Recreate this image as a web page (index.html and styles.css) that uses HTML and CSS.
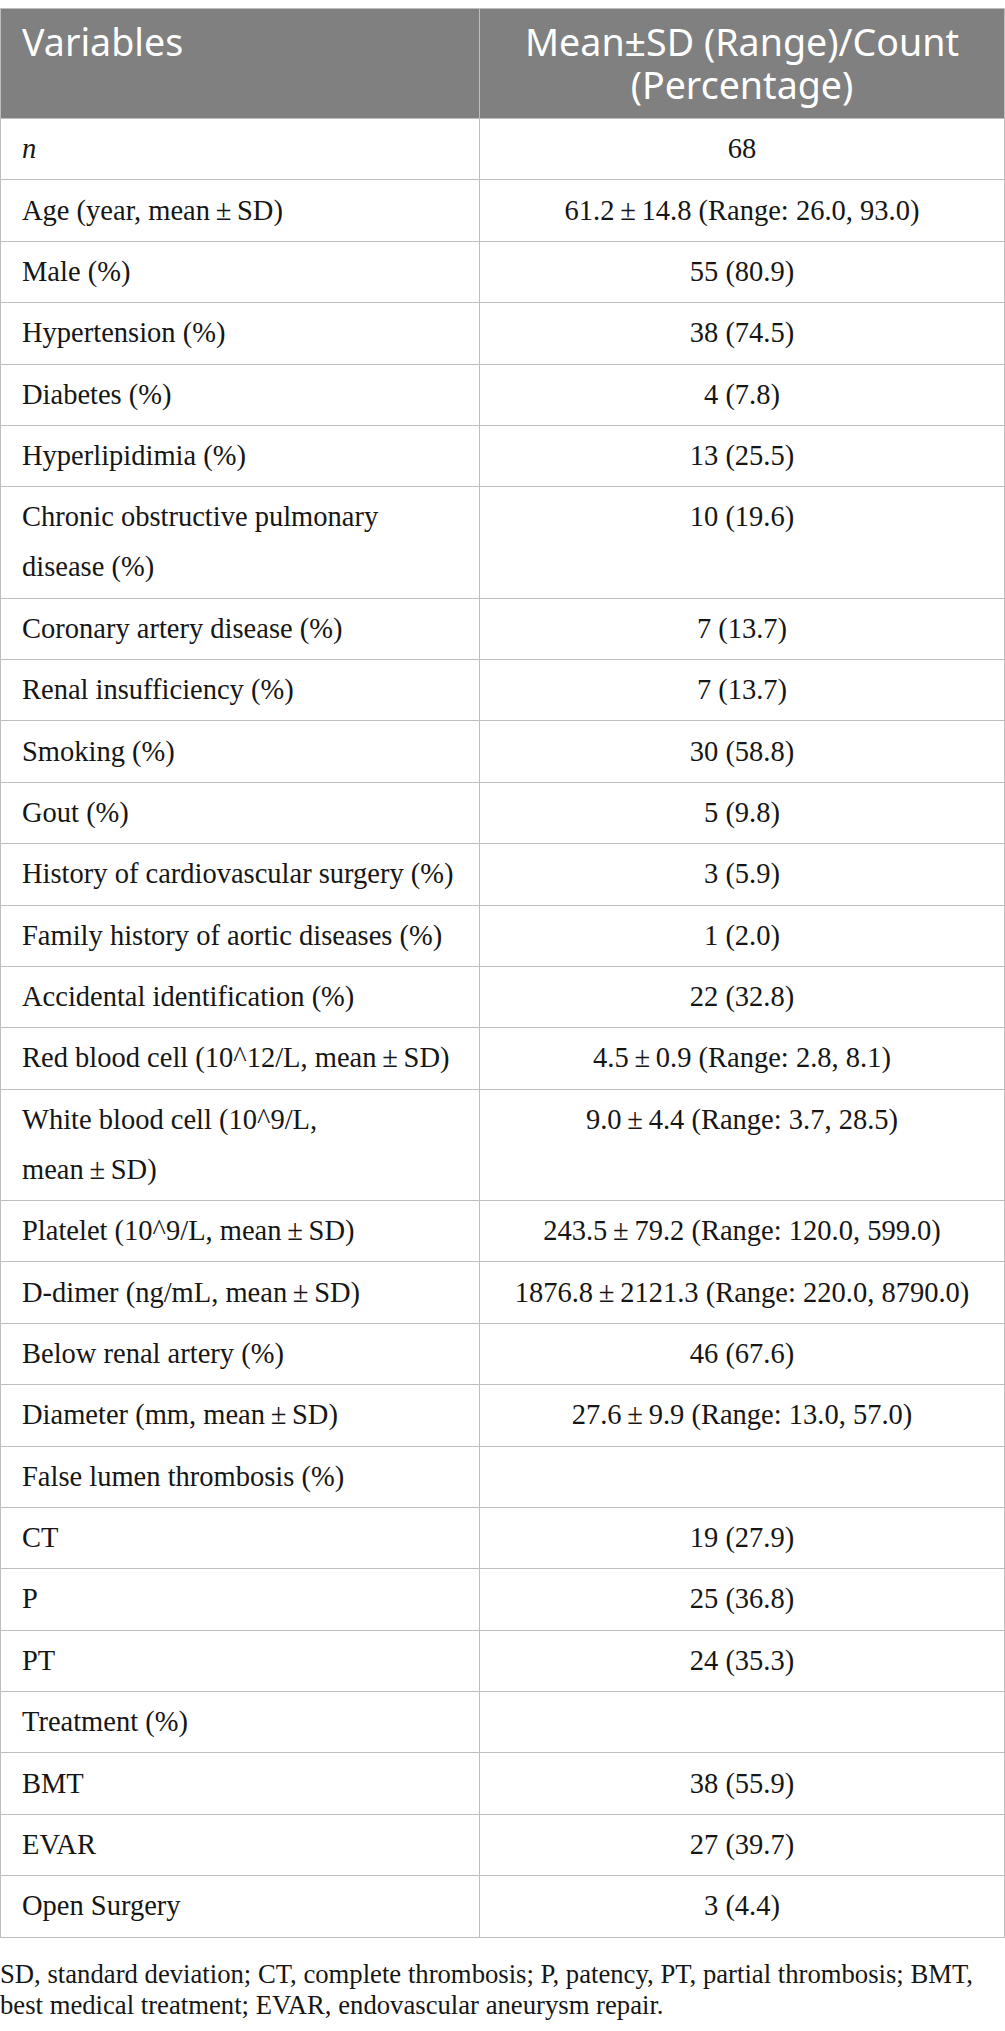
FILE: index.html
```html
<!DOCTYPE html>
<html lang="en">
<head>
    <meta charset="UTF-8">
    <meta name="viewport" content="width=device-width, initial-scale=1.0">
    <title>Table 1</title>

    <link rel="stylesheet" href="styles.css">

</head>
<body>

    <table class="tabla">
        <colgroup>
            <col class="col-variable">
            <col class="col-valor">
        </colgroup>
        <thead>
            <tr>
                <th class="izq">Variables</th>
                <th class="centro">Mean±SD (Range)/Count (Percentage)</th>
            </tr>
        </thead>
        <tbody>
            <tr><td><i>n</i></td><td class="centro">68</td></tr>
            <tr><td>Age (year, mean&#8201;±&#8201;SD)</td><td class="centro">61.2&#8201;±&#8201;14.8 (Range: 26.0, 93.0)</td></tr>
            <tr><td>Male (%)</td><td class="centro">55 (80.9)</td></tr>
            <tr><td>Hypertension (%)</td><td class="centro">38 (74.5)</td></tr>
            <tr><td>Diabetes (%)</td><td class="centro">4 (7.8)</td></tr>
            <tr><td>Hyperlipidimia (%)</td><td class="centro">13 (25.5)</td></tr>
            <tr><td>Chronic obstructive pulmonary<br>disease (%)</td><td class="centro">10 (19.6)</td></tr>
            <tr><td>Coronary artery disease (%)</td><td class="centro">7 (13.7)</td></tr>
            <tr><td>Renal insufficiency (%)</td><td class="centro">7 (13.7)</td></tr>
            <tr><td>Smoking (%)</td><td class="centro">30 (58.8)</td></tr>
            <tr><td>Gout (%)</td><td class="centro">5 (9.8)</td></tr>
            <tr><td>History of cardiovascular surgery (%)</td><td class="centro">3 (5.9)</td></tr>
            <tr><td>Family history of aortic diseases (%)</td><td class="centro">1 (2.0)</td></tr>
            <tr><td>Accidental identification (%)</td><td class="centro">22 (32.8)</td></tr>
            <tr><td>Red blood cell (10^12/L, mean&#8201;±&#8201;SD)</td><td class="centro">4.5&#8201;±&#8201;0.9 (Range: 2.8, 8.1)</td></tr>
            <tr><td>White blood cell (10^9/L,<br>mean&#8201;±&#8201;SD)</td><td class="centro">9.0&#8201;±&#8201;4.4 (Range: 3.7, 28.5)</td></tr>
            <tr><td>Platelet (10^9/L, mean&#8201;±&#8201;SD)</td><td class="centro">243.5&#8201;±&#8201;79.2 (Range: 120.0, 599.0)</td></tr>
            <tr><td>D-dimer (ng/mL, mean&#8201;±&#8201;SD)</td><td class="centro">1876.8&#8201;±&#8201;2121.3 (Range: 220.0, 8790.0)</td></tr>
            <tr><td>Below renal artery (%)</td><td class="centro">46 (67.6)</td></tr>
            <tr><td>Diameter (mm, mean&#8201;±&#8201;SD)</td><td class="centro">27.6&#8201;±&#8201;9.9 (Range: 13.0, 57.0)</td></tr>
            <tr><td>False lumen thrombosis (%)</td><td class="centro"></td></tr>
            <tr><td>CT</td><td class="centro">19 (27.9)</td></tr>
            <tr><td>P</td><td class="centro">25 (36.8)</td></tr>
            <tr><td>PT</td><td class="centro">24 (35.3)</td></tr>
            <tr><td>Treatment (%)</td><td class="centro"></td></tr>
            <tr><td>BMT</td><td class="centro">38 (55.9)</td></tr>
            <tr><td>EVAR</td><td class="centro">27 (39.7)</td></tr>
            <tr><td>Open Surgery</td><td class="centro">3 (4.4)</td></tr>
        </tbody>
    </table>

    <p class="nota">SD, standard deviation; CT, complete thrombosis; P, patency, PT, partial thrombosis; BMT, best medical treatment; EVAR, endovascular aneurysm repair.</p>

</body>
</html>
```

FILE: styles.css
```css
body {
    margin: 0;
    padding-top: 8px;
    background-color: #ffffff;
    color: #161616;
    font-family: 'Liberation Serif', 'Times New Roman', serif;
}

.tabla {
    width: 1005px;
    border-collapse: collapse;
    table-layout: fixed;
}

.col-variable {
    width: 479px;
}

.tabla th,
.tabla td {
    border: 1px solid #bdbdbd;
    vertical-align: top;
}

.tabla th {
    background-color: #7f807f;
    color: #ffffff;
    font-family: 'Noto Sans', 'Open Sans', sans-serif;
    font-size: 37.6px;
    font-weight: normal;
    line-height: 42.5px;
    padding: 12px 21px;
}

.tabla td {
    font-size: 28.5px;
    line-height: 50px;
    padding: 5.2px 14px 5.2px 21px;
}

.tabla td.centro {
    padding: 5.2px 21px;
}

.izq {
    text-align: left;
}

.centro {
    text-align: center;
}

.nota {
    margin: 21px 0 0 0;
    font-size: 26.7px;
    line-height: 31px;
}
```
